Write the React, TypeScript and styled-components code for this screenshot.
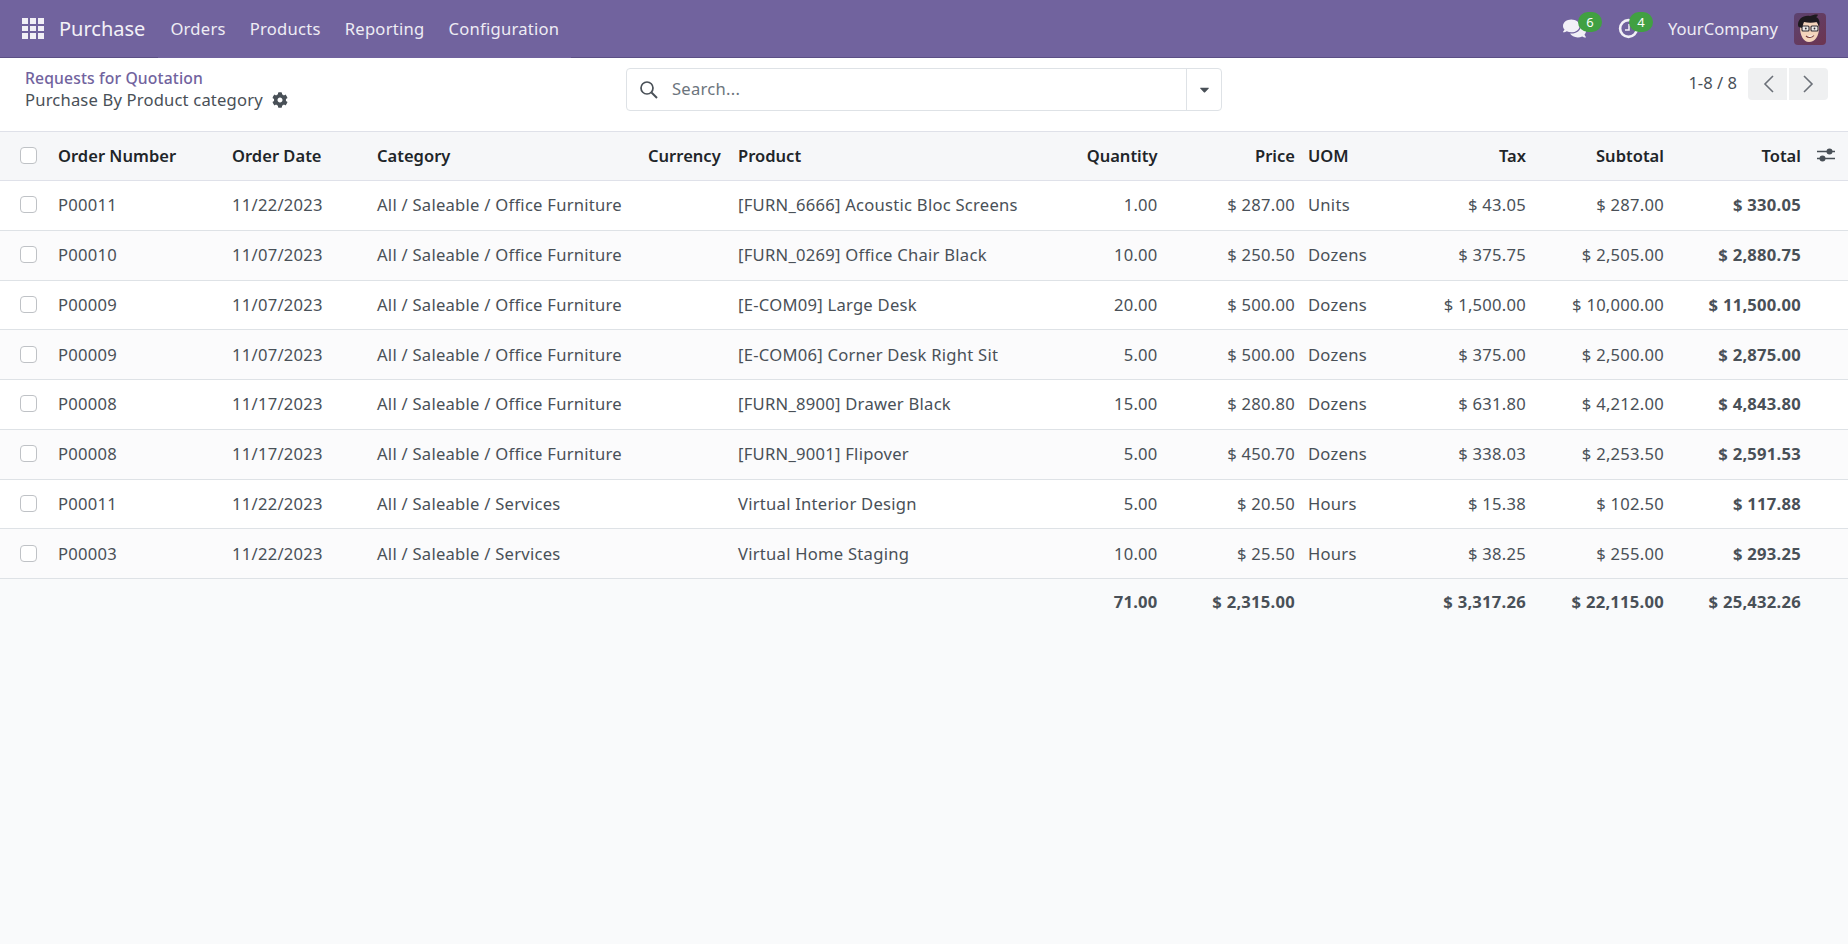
import React from "react";
import styled, { createGlobalStyle } from "styled-components";
import { FaComments, FaCog, FaCaretDown } from "react-icons/fa";

const FONT = `"Noto Sans", "Open Sans", "Liberation Sans", sans-serif`;

const Global = createGlobalStyle`
  html, body { margin: 0; padding: 0; height: 100%; }
  body { background: #f9fafb; font-family: ${FONT}; font-size: 16.6px; letter-spacing: 0.25px; color: #495057; overflow: hidden; }
  #root { height: 100%; }
  * { box-sizing: border-box; }
`;

const Page = styled.div`
  height: 944px;
  display: flex;
  flex-direction: column;
`;

const NavBar = styled.header`
  height: 58px;
  flex: none;
  background: #71639e;
  border-bottom: 1px solid #5b4f85;
  display: flex;
  align-items: stretch;
  padding: 0 22px 0 22px;
  color: #fff;
`;

const Apps = styled.div`
  align-self: center;
  display: grid;
  grid-template-columns: repeat(3, 6px);
  grid-auto-rows: 5.67px;
  gap: 2px;
  margin-right: 15px;
  span { background: #f1eff6; }
`;

const Brand = styled.div`
  align-self: center;
  font-size: 20px;
  letter-spacing: 0;
  color: #f3f1f7;
  margin-right: 13px;
`;

const NavSections = styled.nav`
  display: flex;
  align-items: center;
  gap: 24px;
  padding: 0 12px 2px;
  margin-bottom: -1px;
  background: #71639e;
`;

const NavItem = styled.div`
  font-size: 16.6px;
  color: #eeecf4;
`;

const NavRight = styled.div`
  margin-left: auto;
  display: flex;
  align-items: center;
`;

const IconWrap = styled.div<{ $w: number }>`
  position: relative;
  width: ${(p) => p.$w}px;
  height: 30px;
  display: flex;
  align-items: center;
  color: #f2f0f7;
`;

const Badge = styled.span<{ $left: number }>`
  position: absolute;
  left: ${(p) => p.$left}px;
  top: -1.5px;
  width: 24px;
  height: 20px;
  border-radius: 10px;
  background: #41a042;
  color: #fff;
  font-size: 13px;
  letter-spacing: 0;
  display: flex;
  align-items: center;
  justify-content: center;
`;

const Company = styled.div`
  font-size: 16.6px;
  letter-spacing: 0;
  color: #eeecf4;
  margin-right: 16px;
  padding-bottom: 1px;
`;

const Avatar = styled.svg`
  width: 32px;
  height: 32px;
  border-radius: 4px;
  display: block;
`;

const ControlPanel = styled.div`
  height: 73px;
  flex: none;
  background: #fff;
  display: grid;
  grid-template-columns: 626px 596px 1fr;
  padding-right: 20px;
`;

const Crumbs = styled.div`
  padding: 9px 0 0 25px;
  line-height: 22px;
`;

const CrumbLink = styled.div`
  color: #71639e;
  font-size: 15.7px;
  font-weight: 500;
  letter-spacing: 0.13px;
`;

const CrumbCurrent = styled.div`
  display: flex;
  align-items: center;
  gap: 9px;
  letter-spacing: 0.17px;
  color: #495057;
`;

const SearchBox = styled.div`
  margin-top: 10px;
  height: 43px;
  border: 1px solid #dee2e6;
  border-radius: 4px;
  display: flex;
  align-items: center;
  background: #fff;
`;

const SearchIcon = styled.svg`
  margin: 0 13px 0 12px;
  flex: none;
  display: block;
`;

const SearchText = styled.div`
  flex: 1;
  color: #6c757d;
  padding-bottom: 2px;
`;

const SearchCaret = styled.div`
  width: 35px;
  height: 100%;
  border-left: 1px solid #dee2e6;
  display: flex;
  align-items: center;
  justify-content: center;
  color: #495057;
`;

const Pager = styled.div`
  display: flex;
  justify-content: flex-end;
  padding-top: 10px;
  align-items: flex-start;
`;

const PagerText = styled.div`
  line-height: 30px;
  letter-spacing: 0;
  margin-right: 11px;
`;

const PagerBtn = styled.div<{ $side: "l" | "r" }>`
  width: 39px;
  height: 32px;
  background: #eff0f1;
  margin-left: ${(p) => (p.$side === "r" ? 2 : 0)}px;
  border-radius: ${(p) => (p.$side === "l" ? "4px 0 0 4px" : "0 4px 4px 0")};
  display: flex;
  align-items: center;
  justify-content: center;
  color: #6b7078;
`;

const Table = styled.table`
  width: 1848px;
  table-layout: fixed;
  border-collapse: collapse;
`;

const HeadRow = styled.tr`
  height: 49px;
  background: #f6f7f9;
  border-top: 1px solid #dfe1e9;
  border-bottom: 1px solid #dfe1e9;
`;

const Th = styled.th<{ $right?: boolean; $pl?: number }>`
  padding: 0 0 2px ${(p) => p.$pl ?? 0}px;
  text-align: ${(p) => (p.$right ? "right" : "left")};
  font-size: 16.5px;
  font-weight: 600;
  letter-spacing: 0.02px;
  color: #212529;
  white-space: nowrap;
`;

const BodyRow = styled.tr<{ $even: boolean }>`
  height: 49.75px;
  background: ${(p) => (p.$even ? "#fbfbfc" : "#fff")};
  border-bottom: 1px solid #dee2e6;
`;

const Td = styled.td<{ $right?: boolean; $pl?: number; $bold?: boolean }>`
  padding: 0 0 1px ${(p) => p.$pl ?? 0}px;
  text-align: ${(p) => (p.$right ? "right" : "left")};
  font-weight: ${(p) => (p.$bold ? 700 : 400)};
  color: #495057;
  white-space: nowrap;
`;

const FootRow = styled.tr`
  height: 46px;
  background: transparent;
`;

const Check = styled.span`
  display: block;
  width: 17px;
  height: 17px;
  margin-left: 20px;
  border: 1px solid #bfc2c6;
  border-radius: 4px;
  background: #fff;
`;

const Sliders = styled.svg`
  display: block;
  margin-left: 16px;
`;

const widths = [58, 174, 145, 271, 72.5, 339.5, 97.6, 137.4, 125, 106, 138, 137, 47];

const rows = [
  ["P00011", "11/22/2023", "All / Saleable / Office Furniture", "[FURN_6666] Acoustic Bloc Screens", "1.00", "$ 287.00", "Units", "$ 43.05", "$ 287.00", "$ 330.05"],
  ["P00010", "11/07/2023", "All / Saleable / Office Furniture", "[FURN_0269] Office Chair Black", "10.00", "$ 250.50", "Dozens", "$ 375.75", "$ 2,505.00", "$ 2,880.75"],
  ["P00009", "11/07/2023", "All / Saleable / Office Furniture", "[E-COM09] Large Desk", "20.00", "$ 500.00", "Dozens", "$ 1,500.00", "$ 10,000.00", "$ 11,500.00"],
  ["P00009", "11/07/2023", "All / Saleable / Office Furniture", "[E-COM06] Corner Desk Right Sit", "5.00", "$ 500.00", "Dozens", "$ 375.00", "$ 2,500.00", "$ 2,875.00"],
  ["P00008", "11/17/2023", "All / Saleable / Office Furniture", "[FURN_8900] Drawer Black", "15.00", "$ 280.80", "Dozens", "$ 631.80", "$ 4,212.00", "$ 4,843.80"],
  ["P00008", "11/17/2023", "All / Saleable / Office Furniture", "[FURN_9001] Flipover", "5.00", "$ 450.70", "Dozens", "$ 338.03", "$ 2,253.50", "$ 2,591.53"],
  ["P00011", "11/22/2023", "All / Saleable / Services", "Virtual Interior Design", "5.00", "$ 20.50", "Hours", "$ 15.38", "$ 102.50", "$ 117.88"],
  ["P00003", "11/22/2023", "All / Saleable / Services", "Virtual Home Staging", "10.00", "$ 25.50", "Hours", "$ 38.25", "$ 255.00", "$ 293.25"],
];

const Chevron = ({ dir }: { dir: "l" | "r" }) => (
  <svg width="14" height="20" viewBox="0 0 14 20" fill="none" stroke="currentColor" strokeWidth="1.6">
    <polyline points={dir === "l" ? "12,2 4,10 12,18" : "2,2 10,10 2,18"} />
  </svg>
);

const ActivityIcon = () => (
  <svg width="21" height="21" viewBox="0 0 21 21" fill="none" stroke="#f2f0f7">
    <circle cx="10.5" cy="10.5" r="8.4" strokeWidth="2.6" />
    <path d="M11 6v6H7" strokeWidth="1.5" />
  </svg>
);

const AvatarArt = () => (
  <Avatar viewBox="0 0 32 32">
    <defs>
      <linearGradient id="avBg" x1="0" y1="0" x2="1" y2="1">
        <stop offset="0" stopColor="#5c4270" />
        <stop offset="1" stopColor="#6d3550" />
      </linearGradient>
    </defs>
    <rect width="32" height="32" fill="url(#avBg)" />
    <path d="M6 14c0-5 4-7 9-7s10 2 10 8c0 8-4 14-10 14-6 0-9-7-9-15z" fill="#f4d4bb" />
    <path d="M4 12C4 6 9 2 16 3c3-1 7-2 8-1-1 1-1 2-2 2 4 2 4 6 3 10l-2-5c-4 1-9 1-13 0-1 2-1 4-2 6-3-.5-4-1-4-3z" fill="#1d1a1f" />
    <g fill="#eceae6" stroke="#2b2830" strokeWidth="1.1">
      <rect x="8" y="13" width="7" height="5" rx="1" />
      <rect x="17" y="13" width="7" height="5" rx="1" />
    </g>
    <circle cx="11.8" cy="15.5" r="0.9" fill="#2b2830" />
    <circle cx="20.5" cy="15.5" r="0.9" fill="#2b2830" />
    <path d="M12 23c2 2 6 2 8-.5" stroke="#7a3f3a" strokeWidth="1.1" fill="#fff" />
  </Avatar>
);

export default function App() {
  return (
    <Page>
      <Global />
      <NavBar>
        <Apps>
          {Array.from({ length: 9 }).map((_, i) => (
            <span key={i} />
          ))}
        </Apps>
        <Brand>Purchase</Brand>
        <NavSections>
          <NavItem>Orders</NavItem>
          <NavItem>Products</NavItem>
          <NavItem>Reporting</NavItem>
          <NavItem>Configuration</NavItem>
        </NavSections>
        <NavRight>
          <IconWrap $w={55}>
            <FaComments size={23} />
            <Badge $left={15}>6</Badge>
          </IconWrap>
          <IconWrap $w={50}>
            <ActivityIcon />
            <Badge $left={11}>4</Badge>
          </IconWrap>
          <Company>YourCompany</Company>
          <AvatarArt />
        </NavRight>
      </NavBar>
      <ControlPanel>
        <Crumbs>
          <CrumbLink>Requests for Quotation</CrumbLink>
          <CrumbCurrent>
            Purchase By Product category <FaCog size={16} />
          </CrumbCurrent>
        </Crumbs>
        <SearchBox>
          <SearchIcon width="20" height="20" viewBox="0 0 20 20" fill="none" stroke="#495057" strokeWidth="1.7">
            <circle cx="8" cy="8" r="6" />
            <path d="M12.5 12.5L18 18" strokeWidth="2" />
          </SearchIcon>
          <SearchText>Search...</SearchText>
          <SearchCaret>
            <FaCaretDown size={15} />
          </SearchCaret>
        </SearchBox>
        <Pager>
          <PagerText>1-8 / 8</PagerText>
          <PagerBtn $side="l">
            <Chevron dir="l" />
          </PagerBtn>
          <PagerBtn $side="r">
            <Chevron dir="r" />
          </PagerBtn>
        </Pager>
      </ControlPanel>
      <Table>
        <colgroup>
          {widths.map((w, i) => (
            <col key={i} style={{ width: w }} />
          ))}
        </colgroup>
        <thead>
          <HeadRow>
            <Th>
              <Check />
            </Th>
            <Th>Order Number</Th>
            <Th>Order Date</Th>
            <Th>Category</Th>
            <Th $right>Currency</Th>
            <Th $pl={17.5}>Product</Th>
            <Th $right>Quantity</Th>
            <Th $right>Price</Th>
            <Th $pl={13}>UOM</Th>
            <Th $right>Tax</Th>
            <Th $right>Subtotal</Th>
            <Th $right>Total</Th>
            <Th>
              <Sliders width="19" height="16" viewBox="0 0 19 16" fill="none" stroke="#495057">
                <path d="M0 4.5h18M0 11.5h18" strokeWidth="1.3" />
                <circle cx="12.5" cy="4.5" r="3" fill="#495057" stroke="none" />
                <circle cx="5.5" cy="11.5" r="3" fill="#495057" stroke="none" />
              </Sliders>
            </Th>
          </HeadRow>
        </thead>
        <tbody>
          {rows.map((r, i) => (
            <BodyRow key={i} $even={i % 2 === 1}>
              <Td>
                <Check />
              </Td>
              <Td>{r[0]}</Td>
              <Td>{r[1]}</Td>
              <Td>{r[2]}</Td>
              <Td />
              <Td $pl={17.5}>{r[3]}</Td>
              <Td $right>{r[4]}</Td>
              <Td $right>{r[5]}</Td>
              <Td $pl={13}>{r[6]}</Td>
              <Td $right>{r[7]}</Td>
              <Td $right>{r[8]}</Td>
              <Td $right $bold>
                {r[9]}
              </Td>
              <Td />
            </BodyRow>
          ))}
        </tbody>
        <tfoot>
          <FootRow>
            <Td colSpan={6} />
            <Td $right $bold>
              71.00
            </Td>
            <Td $right $bold>
              $ 2,315.00
            </Td>
            <Td />
            <Td $right $bold>
              $ 3,317.26
            </Td>
            <Td $right $bold>
              $ 22,115.00
            </Td>
            <Td $right $bold>
              $ 25,432.26
            </Td>
            <Td />
          </FootRow>
        </tfoot>
      </Table>
    </Page>
  );
}
